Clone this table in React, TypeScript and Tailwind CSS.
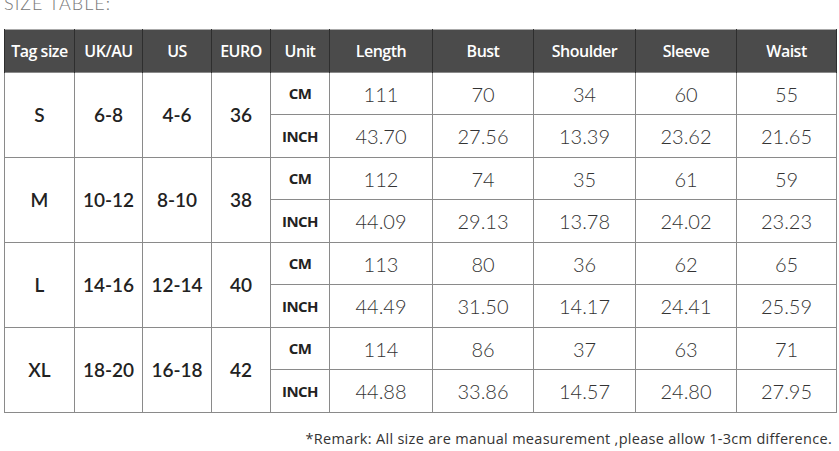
import React from 'react';

const cols = [70, 68, 69, 59, 59, 103, 101, 102, 101, 100];
const heads = ['Tag size', 'UK/AU', 'US', 'EURO', 'Unit', 'Length', 'Bust', 'Shoulder', 'Sleeve', 'Waist'];

const rows = [
  { tag: 'S', uk: '6-8', us: '4-6', eu: '36', cm: ['111', '70', '34', '60', '55'], inch: ['43.70', '27.56', '13.39', '23.62', '21.65'] },
  { tag: 'M', uk: '10-12', us: '8-10', eu: '38', cm: ['112', '74', '35', '61', '59'], inch: ['44.09', '29.13', '13.78', '24.02', '23.23'] },
  { tag: 'L', uk: '14-16', us: '12-14', eu: '40', cm: ['113', '80', '36', '62', '65'], inch: ['44.49', '31.50', '14.17', '24.41', '25.59'] },
  { tag: 'XL', uk: '18-20', us: '16-18', eu: '42', cm: ['114', '86', '37', '63', '71'], inch: ['44.88', '33.86', '14.57', '24.80', '27.95'] },
];

const cell = 'border border-[#8a8a8a] text-center p-0';
const sizeCell = `${cell} text-[19px] font-semibold text-[#222]`;
const unitCell = `${cell} text-[15px] font-bold text-[#222] tracking-[-0.6px] font-['Open_Sans',sans-serif]`;
const numCell = `${cell} text-[20px] font-light text-[#333]`;

export default function App() {
  return (
    <div className="w-[839px] h-[451px] bg-white overflow-hidden relative font-['Lato','Open_Sans',sans-serif]">
      <div className="h-[29px] -mt-[9px] pl-[4px] text-[18px] font-light tracking-[1px] text-[#777] leading-[24px]">SIZE TABLE:</div>
      <div className="mt-[9px] px-[4px]">
        <table className="border-collapse table-fixed w-[832px] border border-[#aaa]">
          <colgroup>
            {cols.map((w, i) => (
              <col key={i} style={{ width: w }} />
            ))}
          </colgroup>
          <thead>
            <tr className="h-[43px] bg-[#4b4b4b]">
              {heads.map((h) => (
                <th key={h} className="border-x border-[#2e2e2e] text-white text-[16px] font-semibold tracking-[-0.5px] font-['Open_Sans',sans-serif] p-0">
                  {h}
                </th>
              ))}
            </tr>
          </thead>
          <tbody>
            {rows.map((r) => (
              <React.Fragment key={r.tag}>
                <tr className="h-[42px]">
                  <td rowSpan={2} className={sizeCell}>{r.tag}</td>
                  <td rowSpan={2} className={sizeCell}>{r.uk}</td>
                  <td rowSpan={2} className={sizeCell}>{r.us}</td>
                  <td rowSpan={2} className={sizeCell}>{r.eu}</td>
                  <td className={unitCell}>CM</td>
                  {r.cm.map((v, i) => (
                    <td key={i} className={numCell}>{v}</td>
                  ))}
                </tr>
                <tr className="h-[43px]">
                  <td className={unitCell}>INCH</td>
                  {r.inch.map((v, i) => (
                    <td key={i} className={numCell}>{v}</td>
                  ))}
                </tr>
              </React.Fragment>
            ))}
          </tbody>
        </table>
      </div>
      <div className="mt-[15px] pr-[7px] text-right text-[14.5px] text-[#333] tracking-[0.3px] font-['Open_Sans',sans-serif]">
        *Remark: All size are manual measurement ,please allow 1-3cm difference.
      </div>
    </div>
  );
}
